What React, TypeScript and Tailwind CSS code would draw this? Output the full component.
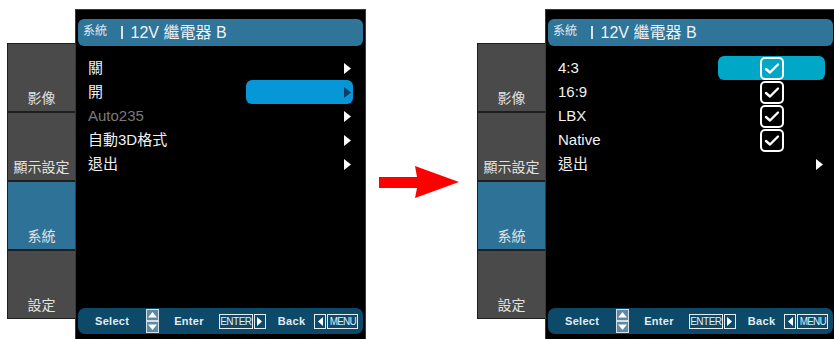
import React from "react";

const FONT = { fontFamily: '"Liberation Sans", "Noto Sans CJK TC", sans-serif' };

const Arrow: React.FC<{ dark?: boolean }> = ({ dark }) => (
	<svg width="7" height="11" viewBox="0 0 7 11">
		<polygon points="0,0 7,5.5 0,11" fill={dark ? "#123c63" : "#ffffff"} />
	</svg>
);

const CheckBox: React.FC = () => (
	<svg width="24" height="23" viewBox="0 0 24 23">
		<rect x="1" y="1" width="22" height="21" rx="4" fill="none" stroke="#ffffff" strokeWidth="2" />
		<path d="M6 12 L10 15.5 L18 7.5" fill="none" stroke="#ffffff" strokeWidth="2.4" strokeLinejoin="round" strokeLinecap="round" />
	</svg>
);

const Sidebar: React.FC = () => {
	const items = [
		{ label: "影像", active: false },
		{ label: "顯示設定", active: false },
		{ label: "系統", active: true },
		{ label: "設定", active: false },
	];
	return (
		<div className="mt-[43px] w-[68px] bg-[#1e1e1e] p-[1px] pr-0 flex flex-col gap-[2px]">
			{items.map((it) => (
				<div
					key={it.label}
					className={`h-[67px] flex items-end justify-center pb-[4px] text-[14px] leading-[18px] text-[#e2e2e2] ${
						it.active ? "bg-[#2e7297]" : "bg-[#4a4a4a]"
					}`}
				>
					{it.label}
				</div>
			))}
		</div>
	);
};

const UpDown: React.FC = () => (
	<svg width="13" height="24" viewBox="0 0 13 24">
		<rect x="0.5" y="0.5" width="12" height="11" fill="#5f8aa3" stroke="#d5dee3" />
		<polygon points="2,8.5 6.5,3 11,8.5" fill="#ffffff" />
		<rect x="0.5" y="12.5" width="12" height="11" fill="#5f8aa3" stroke="#d5dee3" />
		<polygon points="2,15.5 11,15.5 6.5,21" fill="#ffffff" />
	</svg>
);

const BottomBar: React.FC = () => (
	<div className="mx-[2px] mb-[5px] h-[26px] rounded-[7px] bg-[#0d4a6a] flex items-center text-[11px] font-bold tracking-[0.3px] text-[#e4ecf0]">
		<span className="ml-[17px]">Select</span>
		<span className="ml-[17px]">
			<UpDown />
		</span>
		<span className="ml-[15px]">Enter</span>
		<span className="ml-[15px] flex items-center">
			<span className="h-[15px] w-[34px] border border-[#e4ecf0] text-[10px] leading-[13px] tracking-[-0.5px] font-normal text-center">
				ENTER
			</span>
			<span className="ml-[1px] h-[15px] w-[12px] border border-[#e4ecf0] flex items-center justify-center">
				<svg width="5" height="9" viewBox="0 0 5 9">
					<polygon points="0,0 5,4.5 0,9" fill="#ffffff" />
				</svg>
			</span>
		</span>
		<span className="ml-[12px]">Back</span>
		<span className="ml-[9px] flex items-center">
			<span className="h-[15px] w-[12px] border border-[#e4ecf0] flex items-center justify-center">
				<svg width="5" height="9" viewBox="0 0 5 9">
					<polygon points="5,0 0,4.5 5,9" fill="#ffffff" />
				</svg>
			</span>
			<span className="ml-[1px] h-[15px] w-[31px] border border-[#e4ecf0] text-[10px] leading-[13px] tracking-[-0.8px] font-normal text-center">
				MENU
			</span>
		</span>
	</div>
);

type Row = { label: string; dim?: boolean; kind: "arrow" | "check"; selected?: boolean };

const Panel: React.FC<{ rows: Row[]; hl: string; right?: boolean }> = ({ rows, hl, right }) => (
	<div className="mt-[9px] w-[291px] h-[330px] shrink-0 bg-black border border-[#3a3a3a] border-b-0 flex flex-col">
		<div className="mx-[2px] mt-[9px] h-[27px] rounded-[6px] bg-[#2f7499] flex items-center text-[#f2f2f2]">
			<span className="ml-[5px] text-[12px] leading-[14px] -mt-[4px] text-[#e0e8ee]">系統</span>
			<span className="ml-[14px] w-[1.5px] h-[13px] bg-[#d8e2e8]" />
			<span className="ml-[8px] text-[16px] leading-[20px]">12V 繼電器 B</span>
		</div>
		<div className="mt-[10px] flex flex-col">
			{rows.map((r) => (
				<div key={r.label} className="h-[24px] flex items-center">
					<span
						className={`flex-1 pl-[12px] text-[15px] leading-[18px] ${
							r.dim ? "text-[#7a7a7a]" : "text-[#f2f2f2]"
						}`}
					>
						{r.label}
					</span>
					<div
						className={`${right ? "mr-[10px]" : "mr-[12px]"} w-[107px] h-[24px] rounded-[6px] flex items-center ${
							r.kind === "arrow" ? "justify-end pr-[2px]" : "justify-center"
						} ${r.selected ? hl : ""}`}
					>
						{r.kind === "arrow" ? <Arrow dark={r.selected} /> : <CheckBox />}
					</div>
				</div>
			))}
		</div>
		<div className="flex-1" />
		<BottomBar />
	</div>
);

export default function App() {
	const left: Row[] = [
		{ label: "關", kind: "arrow" },
		{ label: "開", kind: "arrow", selected: true },
		{ label: "Auto235", kind: "arrow", dim: true },
		{ label: "自動3D格式", kind: "arrow" },
		{ label: "退出", kind: "arrow" },
	];
	const right: Row[] = [
		{ label: "4:3", kind: "check", selected: true },
		{ label: "16:9", kind: "check" },
		{ label: "LBX", kind: "check" },
		{ label: "Native", kind: "check" },
		{ label: "退出", kind: "arrow" },
	];
	return (
		<div className="w-[834px] h-[339px] bg-white flex overflow-hidden" style={FONT}>
			<div className="ml-[7px] flex items-start shrink-0">
				<Sidebar />
				<Panel rows={left} hl="bg-[#0697d8]" />
			</div>
			<svg className="ml-[13px] mt-[166px] shrink-0" width="80" height="33" viewBox="0 0 80 33">
				<polygon points="0,11 38,11 36,0 80,16 36,32 38,22 0,22" fill="#ff0000" />
			</svg>
			<div className="ml-[18px] flex items-start shrink-0">
				<Sidebar />
				<Panel rows={right} hl="bg-[#00a7c6]" right />
			</div>
		</div>
	);
}
